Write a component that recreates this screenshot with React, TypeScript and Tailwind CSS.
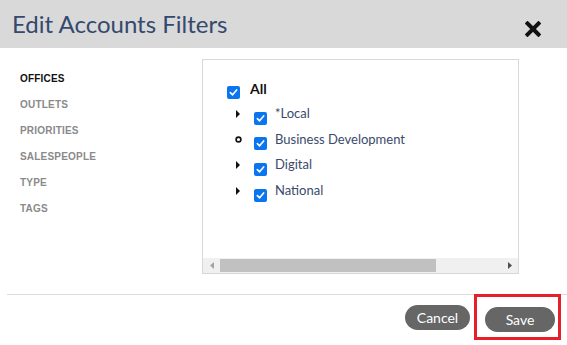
import React from "react";

const Check = () => (
  <span className="inline-flex h-[13px] w-[13px] items-center justify-center rounded-[2px] bg-[#0b75f0]">
    <svg width="9" height="9" viewBox="0 0 10 10">
      <path d="M1.5 5.2 L4 7.6 L8.5 2.2" stroke="white" strokeWidth="1.8" fill="none" strokeLinecap="round" strokeLinejoin="round" />
    </svg>
  </span>
);

const Arrow = () => (
  <svg width="6" height="8" viewBox="0 0 6 8"><path d="M1 0 L5 4 L1 8 Z" fill="#111" /></svg>
);

const Dot = () => (
  <svg width="7" height="7" viewBox="0 0 7 7"><circle cx="3.5" cy="3.5" r="2.4" fill="none" stroke="#111" strokeWidth="1.6" /></svg>
);

const nav = ["OFFICES", "OUTLETS", "PRIORITIES", "SALESPEOPLE", "TYPE", "TAGS"];
const items: { label: string; icon: "arrow" | "dot" }[] = [
  { label: "*Local", icon: "arrow" },
  { label: "Business Development", icon: "dot" },
  { label: "Digital", icon: "arrow" },
  { label: "National", icon: "arrow" },
];

export default function App() {
  return (
    <div className="relative h-[345px] w-[567px] overflow-hidden bg-white" style={{ fontFamily: "Lato, 'Liberation Sans', sans-serif" }}>
      <div className="flex h-[48px] items-center justify-between bg-[#d9d9d9] pl-[12px] pr-[26px]">
        <div className="text-[24px] leading-none text-[#34496e] pb-[1px]">Edit Accounts Filters</div>
        <svg width="16" height="16" viewBox="0 0 16 16" className="mt-[9px]">
          <path d="M2.5 2.5 L13.5 13.5 M13.5 2.5 L2.5 13.5" stroke="#111" strokeWidth="4" strokeLinecap="square" />
        </svg>
      </div>
      <div className="flex h-[226px]">
        <div className="w-[202px] pl-[20px] pt-[25px]" style={{ fontFamily: "'Liberation Sans', Arial, sans-serif" }}>
          {nav.map((n, i) => (
            <div key={n} className={`h-[26px] text-[10px] font-bold leading-[12px] tracking-[0.2px] ${i === 0 ? "text-[#111]" : "text-[#8a8a8a]"}`}>{n}</div>
          ))}
        </div>
        <div className="mt-[11px] flex h-[215px] w-[317px] flex-col border border-[#d8d8d8]">
          <div className="flex-1 pl-[24px] pt-[19px]">
            <div className="flex h-[18px] items-center gap-[10px]">
              <span className="mt-[5px]"><Check /></span>
              <span className="text-[14px] font-bold text-[#111]">All</span>
            </div>
            {items.map((it) => (
              <div key={it.label} className="mt-[7.7px] flex h-[18px] items-center">
                <span className="flex w-[27px] justify-start pl-[8px]">{it.icon === "arrow" ? <Arrow /> : <Dot />}</span>
                <span className="mt-[6px]"><Check /></span>
                <span className="ml-[8px] text-[13px] text-[#3a4a6b]">{it.label}</span>
              </div>
            ))}
          </div>
          <div className="flex h-[15px] items-center bg-[#f0f0f0]">
            <span className="flex w-[17px] justify-center">
              <svg width="4" height="7" viewBox="0 0 4 7"><path d="M4 0 L0 3.5 L4 7 Z" fill="#a3a3a3" /></svg>
            </span>
            <div className="h-[13px] w-[216px] bg-[#c1c1c1]" />
            <div className="flex-1" />
            <span className="flex w-[17px] justify-center">
              <svg width="4" height="7" viewBox="0 0 4 7"><path d="M0 0 L4 3.5 L0 7 Z" fill="#505050" /></svg>
            </span>
          </div>
        </div>
      </div>
      <div className="ml-[7px] mt-[20px] h-px bg-[#dcdcdc]" />
      <div className="-mt-[1px] flex justify-end gap-[4px] pr-[6px]">
        <button className="mt-[11px] h-[25px] w-[65px] rounded-full bg-[#666666] text-[14px] text-white">Cancel</button>
        <div className="h-[46px] w-[87px] border-[3px] border-[#e5202a] pl-[8px] pt-[10px]">
          <button className="h-[25px] w-[70px] rounded-full bg-[#666666] text-[14px] text-white">Save</button>
        </div>
      </div>
    </div>
  );
}
